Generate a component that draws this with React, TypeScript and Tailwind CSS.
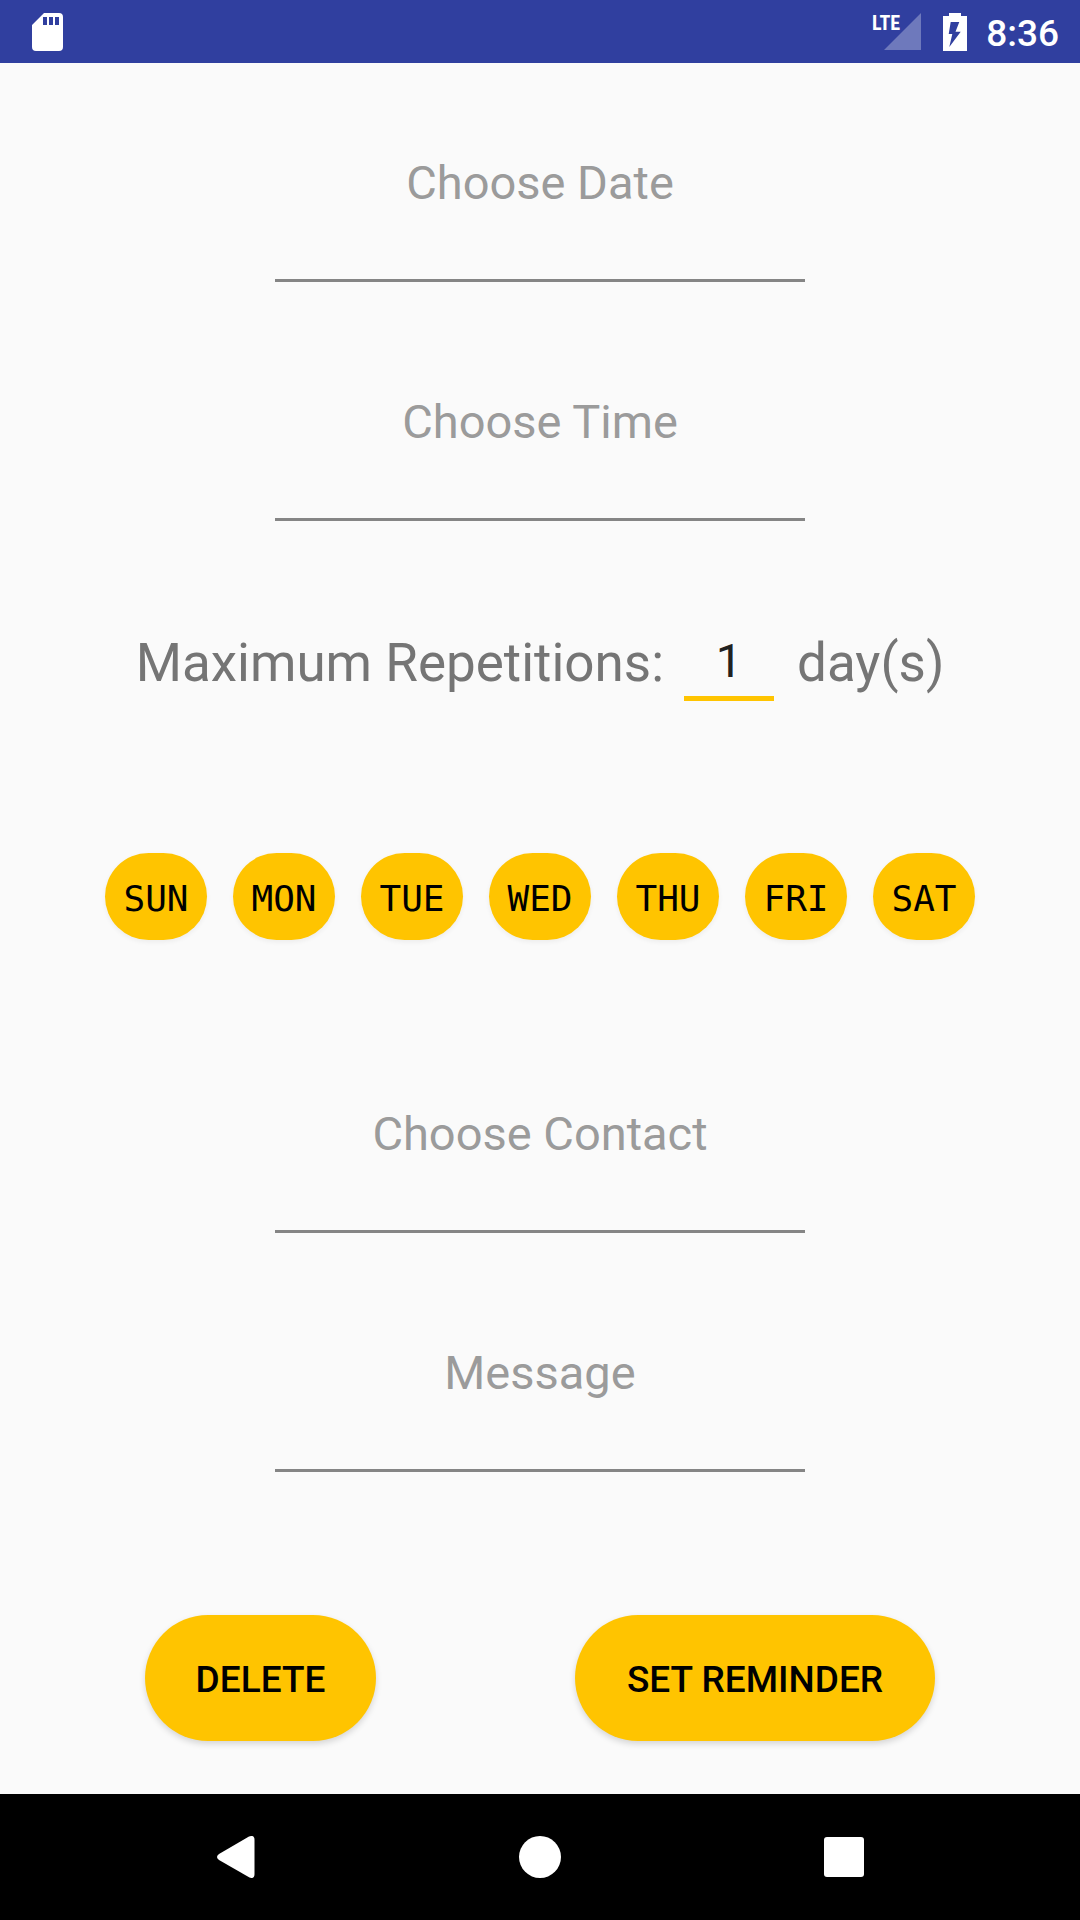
import React from "react";

const DAYS = ["SUN", "MON", "TUE", "WED", "THU", "FRI", "SAT"];

function Field({ label }: { label: string }) {
  return (
    <input
      aria-label={label}
      placeholder={label}
      className="block h-[196px] w-[530px] max-w-full border-b-3 border-[#858585] bg-transparent text-center text-[47px] text-[#212121] outline-none placeholder:text-[#9b9b9b]"
    />
  );
}

function StatusBar() {
  return (
    <header className="flex h-[63px] items-center justify-between bg-[#303f9f] pr-[21px] pl-8 text-white">
      <svg className="h-10 w-8" viewBox="0 0 32 40" fill="currentColor" aria-hidden="true">
        <path
          fillRule="evenodd"
          d="M12 1h15a4 4 0 0 1 4 4v30a4 4 0 0 1-4 4H4a4 4 0 0 1-4-4V13zM11 5v8h4V5zm6 0v8h4V5zm6 0v8h4V5z"
        />
      </svg>
      <div className="flex items-center">
        <div className="relative">
          <span className="absolute top-0 right-[21px] font-['Roboto_Condensed','Liberation_Sans_Narrow',Roboto,sans-serif] text-[20px] leading-none font-bold">
            LTE
          </span>
          <svg className="h-[38px] w-[37px]" viewBox="0 0 37 38" aria-hidden="true">
            <path d="M37 0v37H0z" fill="#fff" fillOpacity=".3" />
          </svg>
        </div>
        <svg className="ml-[22px] h-[38px] w-6" viewBox="0 0 24 38" fill="currentColor" aria-hidden="true">
          <path fillRule="evenodd" d="M6 0h12v3h6v35H0V3h6zM7.700 9 5.700 21H9.300L6.300 34 17.700 18.700H12.500L16.300 9z" />
        </svg>
        <span className="ml-[19px] pt-1 text-[37px] leading-none font-medium">8:36</span>
      </div>
    </header>
  );
}

function NavBar() {
  return (
    <nav className="flex h-[126px] items-center justify-between bg-black px-[215px] text-white">
      <button aria-label="Back">
        <svg className="h-[42px] w-[42px]" viewBox="0 0 42 42" fill="currentColor" aria-hidden="true">
          <path d="M34 .5Q39.500-1.500 39.500 4v34q0 5.500-5 3.500L4 24q-4-3 0-6z" />
        </svg>
      </button>
      <button aria-label="Home">
        <svg className="h-[42px] w-[42px]" viewBox="0 0 42 42" fill="currentColor" aria-hidden="true">
          <circle cx="21" cy="21" r="21" />
        </svg>
      </button>
      <button aria-label="Recent apps">
        <svg className="h-[42px] w-[42px]" viewBox="0 0 42 42" fill="currentColor" aria-hidden="true">
          <rect x="1" y="1" width="40" height="40" rx="3" />
        </svg>
      </button>
    </nav>
  );
}

export default function App() {
  return (
    <div className="flex min-h-screen flex-col bg-[#fafafa] font-[Roboto,sans-serif]">
      <StatusBar />
      <main className="flex flex-1 flex-col items-center pt-[23px]">
        <div className="flex flex-col gap-[43px]">
          <Field label="Choose Date" />
          <Field label="Choose Time" />
        </div>
        <div className="mt-[104px] flex h-[76px] items-center text-[53px] leading-none text-[#757575]">
          <label htmlFor="repetitions">Maximum Repetitions:</label>
          <input
            id="repetitions"
            inputMode="numeric"
            defaultValue="1"
            className="mr-[23px] ml-5 h-[76px] w-[90px] border-b-5 border-[#ffc400] bg-transparent text-center text-[47px] text-[#212121] outline-none"
          />
          <span>day(s)</span>
        </div>
        <div className="mt-[152px] flex gap-[26px]">
          {DAYS.map((day) => (
            <button
              key={day}
              className="h-[87px] w-[102px] rounded-full bg-[#ffc400] pt-1 font-['DejaVu_Sans_Mono',monospace] text-[36px] leading-none text-black shadow-[0_2px_5px_rgba(0,0,0,0.06)]"
            >
              {day}
            </button>
          ))}
        </div>
        <div className="mt-[97px] flex flex-col gap-[43px]">
          <Field label="Choose Contact" />
          <Field label="Message" />
        </div>
        <div className="mt-[143px] flex gap-[199px] text-[37px] leading-none font-medium text-black">
          <button className="h-[126px] w-[231px] rounded-full bg-[#ffc400] pt-0.5 shadow-[0_3px_6px_rgba(0,0,0,0.15)]">
            DELETE
          </button>
          <button className="h-[126px] w-[360px] rounded-full bg-[#ffc400] pt-0.5 shadow-[0_3px_6px_rgba(0,0,0,0.15)]">
            SET REMINDER
          </button>
        </div>
      </main>
      <NavBar />
    </div>
  );
}
